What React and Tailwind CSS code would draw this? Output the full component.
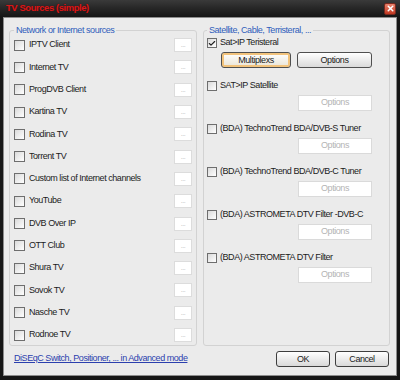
import { Check, X } from 'lucide-react';

const netSources = [
    'IPTV Client',
    'Internet TV',
    'ProgDVB Client',
    'Kartina TV',
    'Rodina TV',
    'Torrent TV',
    'Custom list of Internet channels',
    'YouTube',
    'DVB Over IP',
    'OTT Club',
    'Shura TV',
    'Sovok TV',
    'Nasche TV',
    'Rodnoe TV',
];

const tuners = [
    'SAT>IP Satellite',
    '(BDA) TechnoTrend BDA/DVB-S Tuner',
    '(BDA) TechnoTrend BDA/DVB-C Tuner',
    '(BDA) ASTROMETA DTV Filter -DVB-C',
    '(BDA) ASTROMETA DTV Filter',
];

const CheckBox = ({ checked, small }) => (
    <span
        className={`${small ? 'w-[10px] h-[10px]' : 'w-[11px] h-[11px]'} shrink-0 border border-[#6e6e6e] bg-gradient-to-br from-[#dadada] to-white flex items-center justify-center`}
    >
        {checked && <Check className="w-[9px] h-[9px] text-[#222]" strokeWidth={3.5} />}
    </span>
);

const App = () => {
    return (
        <div className="w-[400px] h-[380px] bg-[#161616] flex flex-col font-['Liberation_Sans',Arial,sans-serif] text-[9px] tracking-[-0.45px] text-[#1b1b1b] select-none">
            {/* title bar */}
            <div className="h-[17px] shrink-0 flex items-center justify-between pl-[6px] pr-[4px] bg-gradient-to-b from-[#3a3a3a] via-[#262626] to-[#151515]">
                <span className="font-bold text-[9.5px] text-[#d8191b] [text-shadow:0_0_1px_#5a0000]">TV Sources (simple)</span>
                <span className="w-[12px] h-[12px] rounded-[2px] border border-[#7a2a20] bg-gradient-to-b from-[#e8806a] to-[#c2361f] flex items-center justify-center">
                    <X className="w-[9px] h-[9px] text-white" strokeWidth={4} />
                </span>
            </div>

            {/* client area */}
            <div className="flex-1 mx-[3px] mb-[4px] bg-[#ebebeb] border border-[#8c8c8c] flex flex-col pl-[5px] pr-[6px] pt-[7px]">
                <div className="flex gap-[6px]">
                    <fieldset className="w-[188px] h-[321px] border border-[#d2d2d2] rounded-[3px] px-[4px]">
                        <legend className="px-[2px] leading-[10px] text-[#2f5dbb]">Network or Internet sources</legend>
                        <div className="-mt-[1px] flex flex-col">
                            {netSources.map((name) => (
                                <div key={name} className="h-[22.3px] flex items-center gap-[4px]">
                                    <CheckBox />
                                    <span className="flex-1 truncate">{name}</span>
                                    <span className="w-[18px] h-[14px] bg-white border border-[#dcdcdc] text-[#bcbcbc] text-[7px] leading-[12px] text-center">...</span>
                                </div>
                            ))}
                        </div>
                    </fieldset>

                    <fieldset className="w-[187px] h-[321px] border border-[#d2d2d2] rounded-[3px] pl-[3px] pr-[4px]">
                        <legend className="px-[2px] leading-[10px] text-[#2f5dbb]">Satellite, Cable, Terristeral, ...</legend>
                        <div className="flex flex-col gap-[10px]">
                            <div className="flex flex-col">
                                <div className="h-[16px] flex items-center gap-[3px]">
                                    <CheckBox checked small />
                                    <span>Sat&gt;IP Teristeral</span>
                                </div>
                                <div className="mt-[1px] pl-[14px] flex gap-[6px]">
                                    <button className="w-[70px] h-[16px] rounded-[3px] border border-[#4f4f4f] bg-gradient-to-b from-white to-[#e9e4d6] shadow-[inset_0_0_0_2px_#f2c37c] leading-none">
                                        Multiplexs
                                    </button>
                                    <button className="w-[75px] h-[16px] rounded-[3px] border border-[#4f4f4f] bg-gradient-to-b from-white to-[#dadada] leading-none">
                                        Options
                                    </button>
                                </div>
                            </div>
                            {tuners.map((name) => (
                                <div key={name} className="flex flex-col">
                                    <div className="h-[16px] flex items-center gap-[3px]">
                                        <CheckBox small />
                                        <span>{name}</span>
                                    </div>
                                    <div className="mt-[1px] pl-[91px]">
                                        <div className="w-[74px] h-[16px] bg-white border border-[#dadada] text-[#b4b4b4] flex items-center justify-center">
                                            Options
                                        </div>
                                    </div>
                                </div>
                            ))}
                        </div>
                    </fieldset>
                </div>

                {/* bottom row */}
                <div className="mt-[4px] h-[18px] flex items-center justify-between pl-[5px] pr-[1px]">
                    <span className="text-[#2b3fae] underline underline-offset-[1px]">DiSEqC Switch, Positioner, ... in Advanced mode</span>
                    <div className="flex gap-[5px]">
                        <button className="w-[54px] h-[16px] rounded-[3px] border border-[#3e3e3e] bg-gradient-to-b from-white to-[#d9d9d9] leading-none">OK</button>
                        <button className="w-[54px] h-[16px] rounded-[3px] border border-[#3e3e3e] bg-gradient-to-b from-white to-[#d9d9d9] leading-none">Cancel</button>
                    </div>
                </div>
            </div>
        </div>
    );
};

export default App;
